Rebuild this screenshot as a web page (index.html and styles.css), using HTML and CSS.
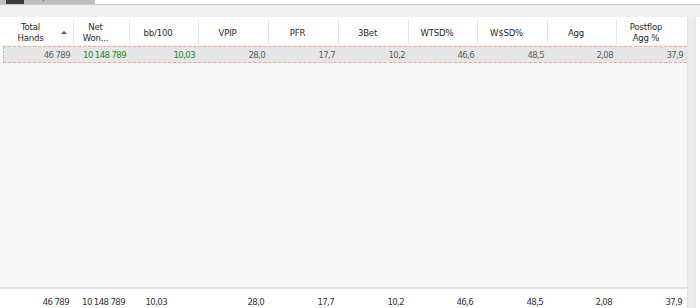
FILE: index.html
```html
<!DOCTYPE html>
<html lang="en">
	<head>
		<meta charset="UTF-8" />
		<title>Stats grid</title>
		<link rel="stylesheet" href="styles.css">
	</head>
	<body>
		<div class="topbar">
			<div class="tab">
				<span class="tab-icon"></span>
				<span class="tab-label">Report (all)</span>
			</div>
		</div>
		<div class="toolstrip"></div>
		<div class="grid-wrap">
			<div class="grid">
				<div class="grid-head">
					<div class="hcell sorted">Total<br>Hands<span class="sort-arrow"></span></div>
					<div class="hcell">Net<br>Won...</div>
					<div class="hcell">bb/100</div>
					<div class="hcell">VPIP</div>
					<div class="hcell">PFR</div>
					<div class="hcell">3Bet</div>
					<div class="hcell">WTSD%</div>
					<div class="hcell">W$SD%</div>
					<div class="hcell">Agg</div>
					<div class="hcell">Postflop<br>Agg %</div>
				</div>
				<div class="grid-body">
					<div class="row selected">
						<div class="cell">46 789</div>
						<div class="cell win">10 148 789</div>
						<div class="cell win">10,03</div>
						<div class="cell">28,0</div>
						<div class="cell">17,7</div>
						<div class="cell">10,2</div>
						<div class="cell">46,6</div>
						<div class="cell">48,5</div>
						<div class="cell">2,08</div>
						<div class="cell">37,9</div>
					</div>
				</div>
				<div class="grid-foot">
					<div class="cell">46 789</div>
					<div class="cell">10 148 789</div>
					<div class="cell bb-total">10,03</div>
					<div class="cell">28,0</div>
					<div class="cell">17,7</div>
					<div class="cell">10,2</div>
					<div class="cell">46,6</div>
					<div class="cell">48,5</div>
					<div class="cell">2,08</div>
					<div class="cell">37,9</div>
				</div>
			</div>
			<div class="vscroll"></div>
		</div>
	</body>
</html>
```

FILE: styles.css
```css
html, body {
	margin: 0;
	padding: 0;
	height: 100%;
	overflow: hidden;
	font-family: 'DejaVu Sans Condensed', 'Liberation Sans', sans-serif;
	font-size: 9.5px;
	color: #333;
	background-color: #fff;
}

.topbar {
	height: 4px;
	border-bottom: 1px solid #c9c9c9;
	background-color: #fff;
	display: flex;
	overflow: hidden;
}

.tab {
	width: 95px;
	background-color: #bdbdbd;
	display: flex;
	gap: 8px;
}

.tab-icon {
	margin-left: 6px;
	width: 18px;
	height: 4px;
	background-color: #3c3c3c;
}

.tab-label {
	color: #333;
	font-size: 9px;
	line-height: 9px;
	margin-top: -8px;
	white-space: nowrap;
}

.toolstrip {
	height: 12px;
	background-color: #f0f0f0;
}

.grid-wrap {
	display: flex;
	height: calc(100% - 17px);
}

.grid {
	width: 687px;
	display: flex;
	flex-direction: column;
	border-right: 1px solid #e3e3e3;
}

.grid-head,
.row,
.grid-foot {
	display: grid;
	grid-template-columns: 74px 56px 69px 70px 70px 70px 69px 70px 69px 70px;
}

.grid-head {
	height: 28px;
	background-color: #fff;
}

.hcell {
	position: relative;
	display: flex;
	align-items: center;
	justify-content: center;
	text-align: center;
	line-height: 11px;
	padding-right: 12px;
	margin: 3px 0 1px;
	border-right: 1px solid #e6e6e6;
	color: #2a2a2a;
	letter-spacing: -0.2px;
}

.hcell:last-child {
	border-right: none;
}

.sort-arrow {
	position: absolute;
	right: 6px;
	top: 11px;
	width: 0;
	height: 0;
	border-left: 3px solid transparent;
	border-right: 3px solid transparent;
	border-bottom: 3px solid #555;
}

.grid-body {
	flex: 1;
	background-color: #f7f7f7;
	padding-top: 1px;
}

.row {
	height: 15px;
	margin-left: 3px;
	background-color: #e6e6e6;
	border: 1px dashed #f2a88a;
	border-right: none;
	grid-template-columns: 71px 56px 69px 70px 70px 70px 69px 70px 69px 70px;
}

.cell {
	text-align: right;
	padding-right: 5px;
	line-height: 15px;
	color: #606060;
	white-space: nowrap;
	letter-spacing: -0.6px;
}

.cell.win {
	color: #238a23;
}

.grid-foot {
	height: 14px;
	border-top: 2px solid #e2e2e2;
	padding-top: 5px;
	background-color: #fff;
}

.grid-foot .cell {
	color: #333;
}

.grid-foot .bb-total {
	padding-right: 32px;
}

.vscroll {
	width: 7px;
	background-color: #ececec;
	border-right: 1px solid #e6e6e6;
}
```
